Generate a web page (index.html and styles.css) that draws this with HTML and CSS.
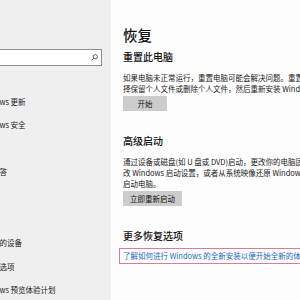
FILE: index.html
```html
<!DOCTYPE html>
<html>
<head>
<meta charset="utf-8">
<link rel="stylesheet" href="styles.css">
</head>
<body>
<div class="window">
  <aside class="nav">
    <div class="search">
      <svg class="search-icon" width="7" height="7" viewBox="0 0 7 7">
        <circle cx="4.3" cy="2.7" r="2.1" fill="none" stroke="#555" stroke-width="0.9"/>
        <line x1="2.8" y1="4.2" x2="0.6" y2="6.4" stroke="#555" stroke-width="1"/>
      </svg>
    </div>
    <ul class="menu">
      <li>Windows 更新</li>
      <li>Windows 安全</li>
      <li>备份</li>
      <li>疑难解答</li>
      <li>恢复</li>
      <li>激活</li>
      <li>查找我的设备</li>
      <li>开发者选项</li>
      <li>Windows 预览体验计划</li>
    </ul>
  </aside>
  <main class="content">
    <h1>恢复</h1>

    <h2 class="first">重置此电脑</h2>
    <p>如果电脑未正常运行，重置电脑可能会解决问题。重置时，你可以选<br>择保留个人文件或删除个人文件，然后重新安装 Windows。</p>
    <button class="btn">开始</button>

    <h2>高级启动</h2>
    <p>通过设备或磁盘(如 U 盘或 DVD)启动，更改你的电脑固件设置，更<br>改 Windows 启动设置，或者从系统映像还原 Windows。这将重新<br>启动电脑。</p>
    <button class="btn">立即重新启动</button>

    <h2>更多恢复选项</h2>
    <a class="link" href="#">了解如何进行 Windows 的全新安装以便开始全新的体验</a>
  </main>
</div>
</body>
</html>
```

FILE: styles.css
```css
body {
  margin: 0;
  overflow: hidden;
  font-family: "Noto Sans CJK SC", "Noto Sans", sans-serif;
  color: #1e1e1e;
}

.window {
  display: flex;
  width: 300px;
  height: 300px;
  overflow: hidden;
}

/* left settings menu, cropped on its left side */

.nav {
  flex: none;
  width: 111px;
  padding-top: 49px;
  background-color: #efefef;
  overflow: hidden;
}

.search {
  box-sizing: border-box;
  width: 102px;
  height: 17px;
  border: 1px solid #8e8e8e;
  border-left: none;
  background-color: #fff;
  display: flex;
  align-items: center;
  justify-content: flex-end;
  padding-right: 3px;
}

.menu {
  list-style: none;
  margin: 23.5px 0 0 -23px;
  padding: 0;
  font-size: 7.5px;
  white-space: nowrap;
  color: #1a1a1a;
}

.menu li {
  height: 23.6px;
  line-height: 23.6px;
}

/* right content pane */

.content {
  flex: none;
  padding: 26px 0 0 12px;
  background-color: #fdfdfd;
  white-space: nowrap;
  display: flex;
  flex-direction: column;
  align-items: flex-start;
}

h1 {
  margin: 0;
  font-size: 14.5px;
  font-weight: 500;
  line-height: 18px;
  color: #111;
}

h2 {
  margin: 23px 0 0;
  font-size: 10px;
  font-weight: 500;
  line-height: 14px;
  color: #111;
}

h2.first {
  margin-top: 6px;
}

p {
  margin: 7.5px 0 0;
  font-size: 7.5px;
  line-height: 11px;
  color: #1a1a1a;
}

.btn {
  margin-top: 2.5px;
  min-width: 44px;
  height: 15px;
  padding: 0 7px;
  border: none;
  background-color: #cccccc;
  font-family: inherit;
  font-size: 7.5px;
  color: #111;
}

.link {
  margin: 5px 0 0 -4px;
  padding: 0 3px;
  height: 14px;
  line-height: 14px;
  border: 1px solid #d47f9a;
  font-size: 7.5px;
  color: #2a66bd;
  text-decoration: none;
}
```
